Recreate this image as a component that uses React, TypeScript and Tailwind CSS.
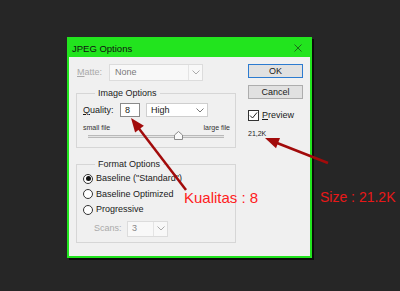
const GREEN = '#22e41e'

function Chevron({ color = '#777' }: { color?: string }) {
  return (
    <svg width="8" height="5" viewBox="0 0 8 5" fill="none">
      <polyline points="0.5,0.5 4,4 7.5,0.5" stroke={color} strokeWidth="1" />
    </svg>
  )
}

function Radio({ checked, label }: { checked?: boolean; label: string }) {
  return (
    <div className="flex items-center h-[15.5px] gap-[3px]">
      <span className="w-[10px] h-[10px] rounded-full border border-[#333] bg-white flex items-center justify-center">
        {checked && <span className="w-[5px] h-[5px] rounded-full bg-[#111]" />}
      </span>
      <span>{label}</span>
    </div>
  )
}

function Dialog() {
  return (
    <div
      className="w-[245px] h-[221px] border-2 flex flex-col bg-[#f0f0f0] shadow-[2px_2px_0_#0c0c0c]"
      style={{ borderColor: GREEN }}
    >
      {/* Title bar */}
      <div className="h-[18px] flex items-center justify-between pl-[3px] pr-[8px] bg-[#22e41e]">
        <span className="text-[9.5px] text-[#111]">JPEG Options</span>
        <svg width="8" height="8" viewBox="0 0 8 8">
          <path d="M0.5 0.5 L7.5 7.5 M7.5 0.5 L0.5 7.5" stroke="#1b6d1b" strokeWidth="1" />
        </svg>
      </div>

      <div className="flex flex-1 pt-[7px] pl-[7px] pr-[7px]">
        {/* Left column */}
        <div className="w-[160px] flex flex-col">
          <div className="flex items-center h-[17px] pl-[1px]">
            <span className="w-[32px] text-[#a9a9a9]">
              <span className="underline">M</span>atte:
            </span>
            <div className="w-[94px] h-[17px] border border-[#dcdcdc] bg-[#f8f8f8] flex">
              <span className="flex-1 pl-[5px] flex items-center text-[#7a7a7a]">None</span>
              <span className="w-[14px] border-l border-[#e4e4e4] flex items-center justify-center">
                <Chevron color="#aaa" />
              </span>
            </div>
          </div>

          <fieldset className="mt-[6px] border border-[#d6d6d6] pl-[6px] pr-[5px] pb-[4px]">
            <legend className="ml-[12px] px-[3px] leading-[12px] text-[#222]">Image Options</legend>
            <div className="flex items-center mt-[4px]">
              <span className="w-[37px]">
                <span className="underline">Q</span>uality:
              </span>
              <div className="w-[20px] h-[14px] border border-[#8a8a8a] bg-white pl-[4px] flex items-center">8</div>
              <div className="ml-[6px] w-[62px] h-[14px] border border-[#cfcfcf] bg-white flex items-center justify-between pl-[4px] pr-[3px]">
                <span>High</span>
                <Chevron />
              </div>
            </div>
            <div className="mt-[6px] flex justify-between text-[7px] leading-[9px] text-[#333]">
              <span>small file</span>
              <span>large file</span>
            </div>
            <div className="mt-[3px] ml-[5px] mr-[6px] h-[3px] bg-[#e4e4e4] border-y border-[#b9b9b9] relative">
              <svg className="absolute left-[86px] -top-[5px]" width="9" height="9" viewBox="0 0 9 9">
                <polygon points="4.5,0.5 8.5,4 8.5,8.5 0.5,8.5 0.5,4" fill="#f9f9f9" stroke="#8a8a8a" />
              </svg>
            </div>
            <div className="h-[5px]" />
          </fieldset>

          <fieldset className="mt-[10px] border border-[#d6d6d6] pl-[6px] pr-[5px] pb-[5px]">
            <legend className="ml-[12px] px-[3px] leading-[12px] text-[#222]">Format Options</legend>
            <div className="flex flex-col mt-[1px]">
              <Radio checked label={'Baseline ("Standard")'} />
              <Radio label="Baseline Optimized" />
              <Radio label="Progressive" />
            </div>
            <div className="flex items-center mt-[3px] pl-[11px]">
              <span className="w-[33px] text-[#aaa]">Scans:</span>
              <div className="w-[41px] h-[16px] border border-[#dcdcdc] bg-[#f8f8f8] flex">
                <span className="flex-1 pl-[4px] flex items-center text-[#888]">3</span>
                <span className="w-[14px] border-l border-[#e4e4e4] flex items-center justify-center">
                  <Chevron color="#aaa" />
                </span>
              </div>
            </div>
          </fieldset>
        </div>

        {/* Right column */}
        <div className="w-[55px] ml-[12px] flex flex-col">
          <div className="h-[14px] border border-[#2c7bd0] bg-[#e1e1e1] flex items-center justify-center">OK</div>
          <div className="mt-[7px] h-[14px] border border-[#adadad] bg-[#e1e1e1] flex items-center justify-center">Cancel</div>
          <div className="mt-[11px] flex items-center gap-[3px]">
            <span className="w-[11px] h-[11px] border border-[#333] bg-white flex items-center justify-center">
              <svg width="9" height="9" viewBox="0 0 9 9">
                <polyline points="1,4.5 3.5,7 8,1.5" fill="none" stroke="#222" strokeWidth="1" />
              </svg>
            </span>
            <span>
              <span className="underline">P</span>review
            </span>
          </div>
          <div className="mt-[8px] text-[7px] leading-[9px] text-[#222]">21,2K</div>
        </div>
      </div>
    </div>
  )
}

function Annotations() {
  return (
    <>
      <svg className="absolute inset-0 pointer-events-none" width="400" height="291">
        <line x1="186" y1="190" x2="137" y2="126" stroke="#a20b0b" strokeWidth="2.5" />
        <polygon points="131,118 135.1,132.5 143.9,125.8" fill="#a20b0b" />
        <line x1="328" y1="163" x2="272" y2="141" stroke="#a20b0b" strokeWidth="2.5" />
        <polygon points="265,138 276,148.3 280,138.1" fill="#a20b0b" />
      </svg>
      <span className="absolute left-[184px] top-[189px] whitespace-nowrap text-[15px] leading-[18px] text-[#ff2020]">
        Kualitas : 8
      </span>
      <span className="absolute left-[320px] top-[188px] whitespace-nowrap text-[14px] leading-[18px] text-[#e81818]">
        Size : 21.2K
      </span>
    </>
  )
}

export default function App() {
  return (
    <div
      className="relative w-[400px] h-[291px] overflow-hidden bg-[#262626] pl-[67px] pt-[37px] text-[9px] leading-[11px] text-[#1a1a1a]"
      style={{ fontFamily: '"Liberation Sans", Arial, sans-serif' }}
    >
      <Dialog />
      <Annotations />
    </div>
  )
}
